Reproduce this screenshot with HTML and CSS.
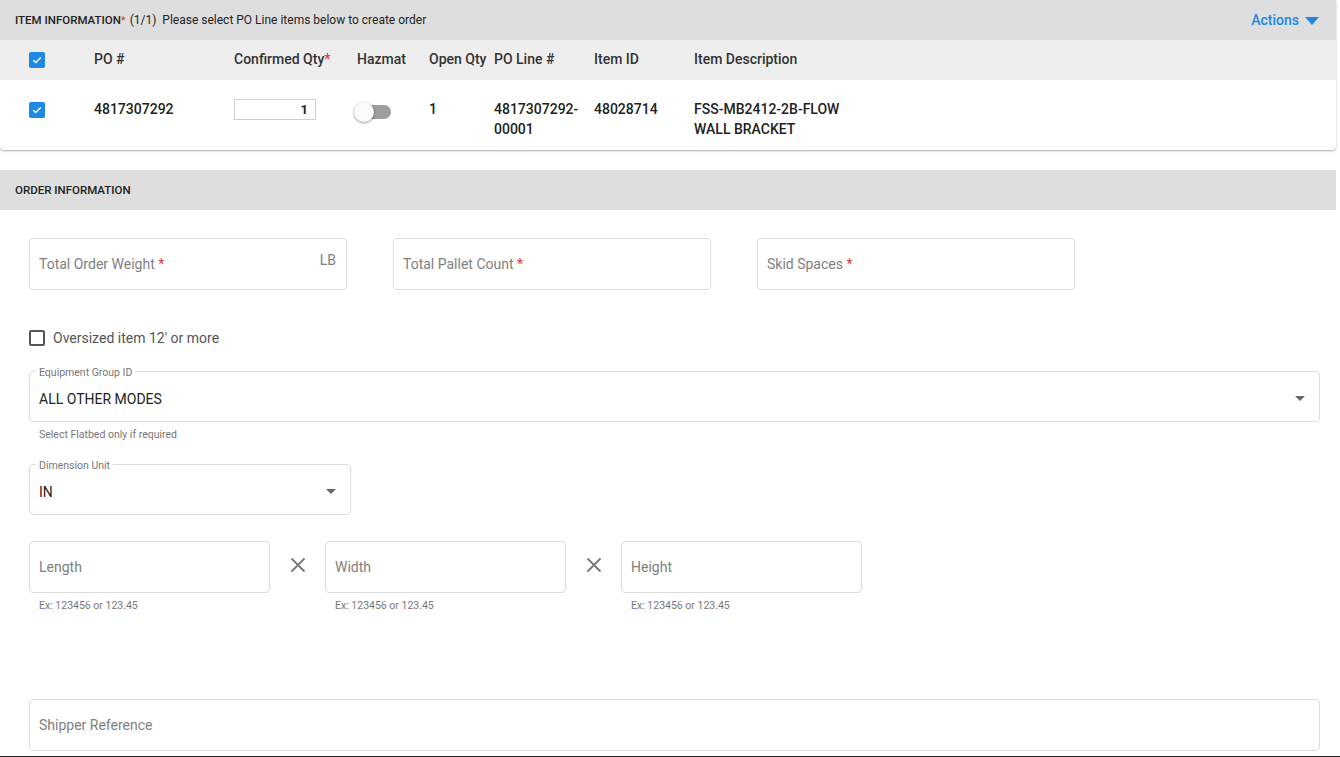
FILE: index.html
```html
<!DOCTYPE html>
<html lang="en">
<head>
<meta charset="utf-8">
<title>Create Order</title>
<link rel="stylesheet" href="styles.css">
</head>
<body>
<div class="page">
  <section class="card">
    <div class="bar">
      <div class="bar-title"><span class="strong">ITEM INFORMATION</span><span class="req">*</span> <span class="sub">(1/1)&nbsp; Please select PO Line items below to create order</span></div>
      <div class="actions">Actions <svg class="act-caret" width="14" height="8" viewBox="0 0 14 8"><path d="M0 0H14L7 8Z" fill="#1e88e5"/></svg></div>
    </div>
    <div class="grid head">
      <div><span class="cb checked"><svg width="12" height="12" viewBox="0 0 12 12"><path d="M2.2 6.2 4.8 8.6 9.8 3.4" fill="none" stroke="#fff" stroke-width="1.4"/></svg></span></div>
      <div>PO #</div>
      <div>Confirmed Qty<span class="req">*</span></div>
      <div>Hazmat</div>
      <div>Open Qty</div>
      <div>PO Line #</div>
      <div>Item ID</div>
      <div>Item Description</div>
    </div>
    <div class="grid row">
      <div><span class="cb checked row-cb"><svg width="12" height="12" viewBox="0 0 12 12"><path d="M2.2 6.2 4.8 8.6 9.8 3.4" fill="none" stroke="#fff" stroke-width="1.4"/></svg></span></div>
      <div>4817307292</div>
      <div><div class="qty">1</div></div>
      <div><div class="toggle"><span class="knob"></span></div></div>
      <div>1</div>
      <div>4817307292-<br>00001</div>
      <div>48028714</div>
      <div>FSS-MB2412-2B-FLOW<br>WALL BRACKET</div>
    </div>
  </section>

  <section class="order">
    <div class="bar bar-order"><div class="bar-title"><span class="strong">ORDER INFORMATION</span></div></div>
    <div class="form">
      <div class="trio">
        <div class="box"><span class="ph">Total Order Weight <span class="req">*</span></span><span class="unit">LB</span></div>
        <div class="box"><span class="ph">Total Pallet Count <span class="req">*</span></span></div>
        <div class="box"><span class="ph">Skid Spaces <span class="req">*</span></span></div>
      </div>

      <label class="check-line"><span class="cb empty"></span><span>Oversized item 12' or more</span></label>

      <fieldset class="sel wide">
        <legend>Equipment Group ID</legend>
        <div class="sel-val"><span>ALL OTHER MODES</span><svg width="10" height="5" viewBox="0 0 10 5"><path d="M0 0H10L5 5Z" fill="#666"/></svg></div>
      </fieldset>
      <div class="help">Select Flatbed only if required</div>

      <fieldset class="sel unit-sel">
        <legend>Dimension Unit</legend>
        <div class="sel-val"><span>IN</span><svg width="10" height="5" viewBox="0 0 10 5"><path d="M0 0H10L5 5Z" fill="#666"/></svg></div>
      </fieldset>

      <div class="dims">
        <div class="dim"><div class="box"><span class="ph">Length</span></div><div class="help">Ex: 123456 or 123.45</div></div>
        <div class="times"><svg width="16" height="16" viewBox="0 0 16 16"><path d="M1.5 1.5 14.5 14.5M14.5 1.5 1.5 14.5" stroke="#777" stroke-width="1.8"/></svg></div>
        <div class="dim"><div class="box"><span class="ph">Width</span></div><div class="help">Ex: 123456 or 123.45</div></div>
        <div class="times"><svg width="16" height="16" viewBox="0 0 16 16"><path d="M1.5 1.5 14.5 14.5M14.5 1.5 1.5 14.5" stroke="#777" stroke-width="1.8"/></svg></div>
        <div class="dim"><div class="box"><span class="ph">Height</span></div><div class="help">Ex: 123456 or 123.45</div></div>
      </div>

      <div class="box wide shipper"><span class="ph">Shipper Reference</span></div>
    </div>
    <div class="bottom-line"></div>
  </section>
</div>
</body>
</html>
```

FILE: styles.css
```css
* { box-sizing: border-box; }
html, body { margin: 0; padding: 0; background: #fff; }
body { font-family: Roboto, "Noto Sans", Arial, sans-serif; color: #333; overflow: hidden; }
.page { width: 1336px; }

.card {
  background: #fff;
  border-radius: 0 0 4px 4px;
  box-shadow: 0 1px 2px rgba(0,0,0,0.35);
}
.bar {
  height: 40px;
  background: #dedede;
  display: flex;
  align-items: center;
  justify-content: space-between;
  padding: 0 17px 0 15px;
  font-size: 11.5px;
  color: #222;
}
.strong { font-weight: 500; }
.sub { margin-left: 1px; color: #222; font-size: 12px; }
.req { color: #e53935; }
.actions {
  font-size: 14px;
  color: #1e88e5;
  font-weight: 500;
  display: flex;
  align-items: center;
  gap: 6px;
}
.act-caret { margin-top: 1px; }

.grid {
  display: grid;
  grid-template-columns: 65px 140px 123px 72px 65px 100px 100px 1fr;
  padding-left: 29px;
  font-size: 14px;
}
.head {
  height: 40px;
  padding-bottom: 3px;
  background: #eeeeee;
  align-items: center;
  font-weight: 500;
  color: #333;
}
.head .cb { margin-top: 3px; }
.row {
  height: 70px;
  padding-top: 19px;
  line-height: 20px;
  font-weight: 500;
  color: #222;
  align-items: start;
}
.cb {
  width: 16px; height: 16px;
  display: inline-flex; align-items: center; justify-content: center;
  border-radius: 2px;
  vertical-align: middle;
}
.cb.checked { background: #1e88e5; }
.row-cb { margin-top: 3px; display: flex; }
.qty {
  width: 82px; height: 21px;
  border: 1px solid #cfcfcf;
  text-align: right;
  padding-right: 7px;
  line-height: 19px;
  font-weight: 700;
  font-size: 13px;
}
.toggle {
  position: relative;
  width: 34px; height: 14px;
  margin-top: 6px;
  background: #9e9e9e;
  border-radius: 7px;
}
.knob {
  position: absolute;
  left: -3px; top: -3px;
  width: 20px; height: 20px;
  border-radius: 50%;
  background: #fafafa;
  box-shadow: 0 1px 3px rgba(0,0,0,0.4);
}

.order { margin-top: 20px; }
.bar-order { height: 40px; }
.form { padding: 28px 16px 0 29px; }

.trio { display: flex; gap: 46px; }
.box {
  height: 52px;
  border: 1px solid #dcdcdc;
  border-radius: 4px;
  display: flex;
  align-items: center;
  justify-content: space-between;
  padding: 0 10px 0 9px;
  font-size: 14px;
}
.trio .box { width: 318px; }
.ph { color: #808080; }
.unit { color: #808080; margin-top: -8px; }

.check-line {
  display: flex;
  align-items: center;
  gap: 8px;
  margin-top: 40px;
  font-size: 14px;
  color: #555;
}
.cb.empty { border: 2px solid #555; }

.sel {
  margin: 0;
  border: 1px solid #dcdcdc;
  border-radius: 4px;
  padding: 0 14px 0 9px;
}
.sel legend {
  font-size: 10.5px;
  line-height: 12px;
  padding: 4px 3px 0;
  color: #777;
  margin-left: -3px;
}
.sel-val {
  display: flex;
  align-items: center;
  justify-content: space-between;
  font-size: 14px;
  line-height: 20px;
  color: #222;
  padding: 10px 0 12px;
}
.sel-val svg { margin-top: -2px; }
.wide { width: 1291px; }
.sel.wide { margin-top: 17px; }
.unit-sel { width: 322px; margin-top: 15px; }

.help {
  font-size: 10.5px;
  line-height: 12px;
  color: #777;
  margin-top: 7px;
  padding-left: 10px;
}

.dims { display: flex; margin-top: 26px; align-items: flex-start; }
.dim .box { width: 241px; }
.dim .help { margin-top: 7px; }
.times { width: 55px; height: 52px; display: flex; align-items: center; justify-content: center; }
.times svg { margin-top: -4px; }

.shipper { margin-top: 87px; }
.bottom-line { height: 3px; background: #222; margin-top: 5px; width: 1340px; }
```
